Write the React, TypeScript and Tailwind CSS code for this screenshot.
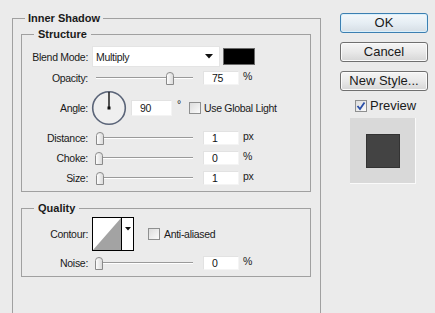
import React from "react";

const font = { fontFamily: '"Liberation Sans", Arial, sans-serif' };

const txt = "text-[10.5px] tracking-[-0.3px]";

function Thumb() {
  return (
    <svg width="8" height="13" viewBox="0 0 8 13" className="block">
      <defs>
        <linearGradient id="tg" x1="0" x2="1" y1="0" y2="0">
          <stop offset="0" stopColor="#ffffff" />
          <stop offset="1" stopColor="#d8d8d8" />
        </linearGradient>
      </defs>
      <path d="M0.5 12.5 V3.5 Q0.5 0.5 4 0.5 Q7.5 0.5 7.5 3.5 V12.5 Z" fill="url(#tg)" stroke="#8a8a8a" strokeWidth="1" />
    </svg>
  );
}

function Slider({ value }: { value: number }) {
  const left = Math.round((value / 100) * 94);
  return (
    <div className="relative w-[101px] h-[14px] ml-[6px] shrink-0">
      <div className="absolute left-[2px] right-[2px] top-[6px] h-[1px] bg-[#9a9a9a]" />
      <div className="absolute left-[2px] right-[2px] top-[7px] h-[1px] bg-[#ffffff]" />
      <div className="absolute top-[1px]" style={{ left: left + 1 }}>
        <Thumb />
      </div>
    </div>
  );
}

function NumInput({ v, w = 36 }: { v: string; w?: number }) {
  return (
    <div
      className={`h-[14px] bg-white border border-[#f4f4f4] border-t-[#e2e2e2] border-l-[#e2e2e2] ${txt} leading-[12px] pl-[8px] text-[#111] shrink-0`}
      style={{ width: w }}
    >
      {v}
    </div>
  );
}

function Label({ children }: { children: React.ReactNode }) {
  return <div className={`w-[66px] text-right ${txt} leading-[14px] text-[#1a1a1a] shrink-0`}>{children}</div>;
}

function CheckBox({ checked = false }: { checked?: boolean }) {
  return (
    <div className="w-[12px] h-[12px] border border-[#8e8f8f] bg-gradient-to-br from-[#dcdcdc] to-[#fbfbfb] flex items-center justify-center shrink-0">
      {checked && (
        <svg width="10" height="10" viewBox="0 0 10 10">
          <path d="M1.5 5 L4 8 L8.5 1.5" fill="none" stroke="#2a4fa8" strokeWidth="1.8" />
        </svg>
      )}
    </div>
  );
}

function SliderRow({ label, value, unit, mt }: { label: string; value: string; unit: string; mt: string }) {
  return (
    <div className={`flex items-center h-[14px] ${mt}`}>
      <Label>{label}</Label>
      <Slider value={Number(value)} />
      <div className="ml-[8px]">
        <NumInput v={value} />
      </div>
      <div className={`ml-[4px] ${txt} leading-[12px] text-[#1a1a1a] -mt-[4px]`}>{unit}</div>
    </div>
  );
}

function Button({ children, primary = false }: { children: React.ReactNode; primary?: boolean }) {
  return (
    <div
      className={`w-[88px] h-[20px] rounded-[3px] border flex items-center justify-center text-[13px] leading-[14px] text-[#1a1a1a] ${
        primary
          ? "border-[#3c7fb1] bg-gradient-to-b from-[#f4f8fb] via-[#e6eef4] to-[#d6dee5] shadow-[inset_0_0_0_1px_#d9f0fc]"
          : "border-[#707070] bg-gradient-to-b from-[#f5f5f5] via-[#e9e9e9] to-[#d6d6d6] shadow-[inset_0_0_0_1px_#fbfbfb]"
      }`}
    >
      {children}
    </div>
  );
}

export default function App() {
  return (
    <div className="w-[435px] h-[313px] overflow-hidden bg-[#ebebeb] flex text-[#1a1a1a]" style={font}>
      <div className="relative ml-[12px] mt-[18px] w-[309px] h-[330px] border border-[#a0a0a0] shrink-0">
        <div className="absolute left-3 -top-2 px-[3px] bg-[#ebebeb] text-[11px] leading-[14px] font-bold text-[#1a1a1a]">
          Inner Shadow
        </div>

        <fieldset className="ml-[8px] mt-[8px] w-[290px] border border-[#a0a0a0] pl-[12px] pb-[6px]">
          <legend className="px-[4px] text-[11px] leading-[14px] font-bold">Structure</legend>

          <div className="-ml-[12px]">
            <div className="flex items-center h-[21px] mt-[5px]">
              <Label>Blend Mode:</Label>
              <div className="ml-[4px] w-[128px] h-[21px] bg-white border border-[#e4e4e4] flex items-center justify-between pl-[3px] pr-[6px] shrink-0">
                <span className={`${txt} leading-[12px]`}>Multiply</span>
                <svg width="8" height="5" viewBox="0 0 8 5">
                  <path d="M0 0 H8 L4 4.5 Z" fill="#111" />
                </svg>
              </div>
              <div className="ml-[3px] w-[32px] h-[17px] bg-black border border-[#6a6a6a] shrink-0" />
            </div>

            <SliderRow label="Opacity:" value="75" unit="%" mt="mt-[4px]" />

            <div className="flex items-center h-[34px] mt-[6px]">
              <Label>Angle:</Label>
              <svg width="36" height="36" viewBox="0 0 36 36" className="ml-[3px] shrink-0">
                <circle cx="18" cy="18" r="16.3" fill="#efefef" stroke="#5a6478" strokeWidth="1.6" />
                <line x1="18" y1="18" x2="18" y2="2" stroke="#111" strokeWidth="1.4" />
                <rect x="16.5" y="16.5" width="3" height="3" fill="#111" />
              </svg>
              <div className={`ml-[4px] w-[41px] h-[16px] bg-white border border-[#f4f4f4] border-t-[#e2e2e2] border-l-[#e2e2e2] ${txt} leading-[14px] pl-[8px] shrink-0`}>
                90
              </div>
              <div className={`ml-[5px] ${txt} leading-[12px] -mt-[8px]`}>°</div>
              <div className="ml-[8px]">
                <CheckBox />
              </div>
              <div className={`ml-[3px] ${txt} leading-[14px]`}>Use Global Light</div>
            </div>

            <SliderRow label="Distance:" value="1" unit="px" mt="mt-[6px]" />
            <SliderRow label="Choke:" value="0" unit="%" mt="mt-[6px]" />
            <SliderRow label="Size:" value="1" unit="px" mt="mt-[6px]" />
          </div>
        </fieldset>

        <fieldset className="ml-[8px] mt-[9px] w-[290px] border border-[#a0a0a0] pl-[12px] pb-[6px]">
          <legend className="px-[4px] text-[11px] leading-[14px] font-bold">Quality</legend>

          <div className="-ml-[12px]">
            <div className="flex items-center h-[34px] mt-[2px]">
              <Label>Contour:</Label>
              <div className="ml-[4px] w-[42px] h-[34px] bg-white border border-black flex shrink-0">
                <svg width="28" height="32" viewBox="0 0 28 32" className="block">
                  <path d="M0 32 L28 0 V32 Z" fill="#a3a3a3" />
                </svg>
                <div className="w-[12px] h-[32px] border-l border-black flex items-start justify-center pt-[9px]">
                  <svg width="6" height="4" viewBox="0 0 6 4">
                    <path d="M0 0 H6 L3 3.5 Z" fill="#111" />
                  </svg>
                </div>
              </div>
              <div className="ml-[14px]">
                <CheckBox />
              </div>
              <div className={`ml-[4px] ${txt} leading-[14px]`}>Anti-aliased</div>
            </div>

            <SliderRow label="Noise:" value="0" unit="%" mt="mt-[5px]" />
          </div>
        </fieldset>
      </div>

      <div className="ml-[19px] mt-[13px] flex flex-col w-[88px] shrink-0">
        <Button primary>OK</Button>
        <div className="mt-[9px]">
          <Button>Cancel</Button>
        </div>
        <div className="mt-[9px]">
          <Button>New Style...</Button>
        </div>
        <div className="mt-[8px] ml-[15px] flex items-center h-[14px]">
          <CheckBox checked />
          <span className="ml-[3px] text-[13px] leading-[14px]">Preview</span>
        </div>
        <div className="mt-[5px] ml-[10px] w-[66px] h-[66px] bg-[#d9d9d9] border-r border-b border-[#fafafa] flex items-center justify-center">
          <div className="w-[34px] h-[34px] bg-[#434343] border border-[#333]" />
        </div>
      </div>
    </div>
  );
}
